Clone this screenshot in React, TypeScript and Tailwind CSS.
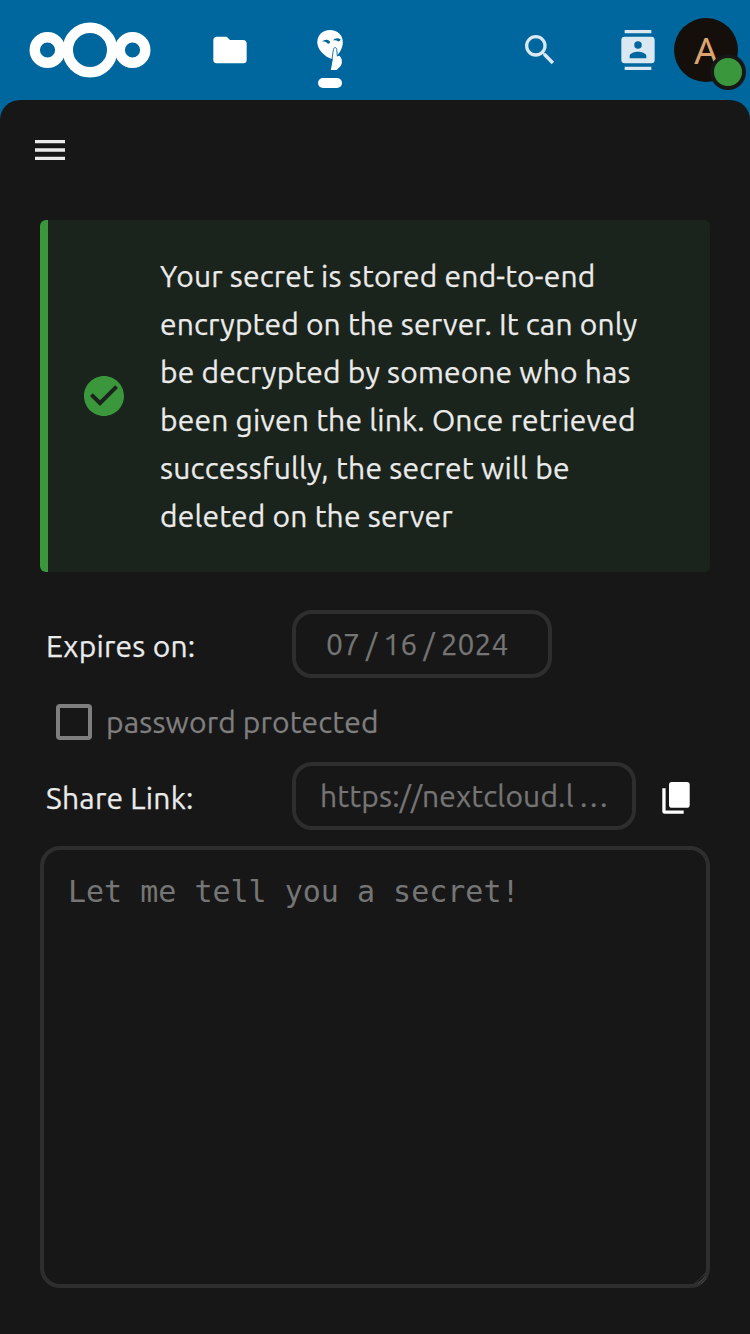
import type { ReactNode } from "react";

function Icon({ d, className }: { d: string; className: string }) {
  return (
    <svg viewBox="0 0 24 24" fill="currentColor" className={className}>
      <path d={d} />
    </svg>
  );
}

const FOLDER =
  "M10,4H4C2.89,4 2,4.89 2,6V18A2,2 0 0,0 4,20H20A2,2 0 0,0 22,18V8C22,6.89 21.1,6 20,6H12L10,4Z";
const MAGNIFY =
  "M9.5,3A6.5,6.5 0 0,1 16,9.5C16,11.11 15.41,12.59 14.44,13.73L14.71,14H15.5L20.5,19L19,20.5L14,15.5V14.71L13.73,14.44C12.59,15.41 11.11,16 9.5,16A6.5,6.5 0 0,1 3,9.5A6.5,6.5 0 0,1 9.5,3M9.5,5C7,5 5,7 5,9.5C5,12 7,14 9.5,14C12,14 14,12 14,9.5C14,7 12,5 9.5,5Z";
const CONTACTS =
  "M20,0H4V2H20V0M4,24H20V22H4V24M20,4H4A2,2 0 0,0 2,6V18A2,2 0 0,0 4,20H20A2,2 0 0,0 22,18V6A2,2 0 0,0 20,4M12,6.75A2.25,2.25 0 0,1 14.25,9A2.25,2.25 0 0,1 12,11.25A2.25,2.25 0 0,1 9.75,9A2.25,2.25 0 0,1 12,6.75M17,17H7V15.5C7,13.83 10.33,13 12,13C13.67,13 17,13.83 17,15.5V17Z";
const MENU = "M3,6H21V8H3V6M3,11H21V13H3V11M3,16H21V18H3V16Z";
const CHECK =
  "M12 2C6.5 2 2 6.5 2 12S6.5 22 12 22 22 17.5 22 12 17.5 2 12 2M10 17L5 12L6.41 10.59L10 14.17L17.59 6.58L19 8L10 17Z";

function Logo() {
  return (
    <svg viewBox="0 0 124 56" fill="none" stroke="#fff" className="h-14 w-[124px]">
      <circle cx="19.5" cy="28" r="12.8" strokeWidth="10.4" />
      <circle cx="62" cy="28" r="22.25" strokeWidth="10.5" />
      <circle cx="104.5" cy="28" r="12.8" strokeWidth="10.4" />
    </svg>
  );
}

function SecretsIcon() {
  return (
    <svg viewBox="0 0 40 42" className="h-[42px] w-10">
      <path
        fill="#fff"
        d="M20 1C27.5 1 32.8 6 32.8 13.2C32.8 19 29.5 24.5 25 28.5L21.5 30C14 27 7.3 20.5 7.3 13.2C7.3 6 12.5 1 20 1Z"
      />
      <path fill="#00679e" d="M12 12.8C14 10 18.5 10 19.9 12.6C20.2 14.8 18.4 15.6 17 14.1C15.5 12.6 13.6 12.4 12 12.8Z" />
      <path fill="#00679e" d="M23.2 11.6C24.5 8.8 28 8.6 30.6 10.3C30.2 12.4 28.4 13.2 27.2 11.8C26.2 10.9 24.7 11.1 23.2 11.6Z" />
      <path
        fill="#fff"
        d="M22.6 30L23.7 20.5C23.9 18.4 26.2 18.4 26.5 20.5L26.9 27.4L29.4 26.8C31.5 28.5 32 31 31.9 33.5C31.7 36 30 38 28 39.6L26.6 41H20.8L22 35Z"
      />
      <path
        fill="none"
        stroke="#00679e"
        strokeWidth="0.9"
        d="M21.6 33L23.4 20.5C23.7 18 26.4 18 26.8 20.5L27.2 26.5"
      />
    </svg>
  );
}

function CopyIcon() {
  return (
    <svg viewBox="0 0 28 32" fill="#fff" className="h-8 w-7">
      <rect x="7" y="0" width="20.7" height="25.7" rx="2.8" />
      <path d="M0.3 6.3H3.6V28.4H21.7V31.7H2.8Q0.3 31.7 0.3 29.2Z" />
    </svg>
  );
}

function Line({ className, children }: { className: string; children: ReactNode }) {
  return (
    <span className={"block whitespace-nowrap [-webkit-text-stroke:0.25px_currentColor] " + className}>
      {children}
    </span>
  );
}

export default function App() {
  return (
    <div className="flex h-[1334px] w-[750px] flex-col overflow-hidden bg-[#00679e] font-['Ubuntu','Noto_Sans',sans-serif] text-[30px] text-[#ebebeb]">
      <header className="flex h-[100px] shrink-0 items-center pl-7">
        <Logo />
        <div className="ml-[58px] text-white">
          <Icon d={FOLDER} className="size-10" />
        </div>
        <div className="ml-[60px] flex h-full w-10 flex-col items-center pt-[29px]">
          <SecretsIcon />
          <div className="mt-[7px] h-2.5 w-6 rounded-full bg-white" />
        </div>
        <div className="ml-[170px] text-[#d9e8f1]">
          <Icon d={MAGNIFY} className="size-10" />
        </div>
        <div className="ml-[58px] text-[#d9e8f1]">
          <Icon d={CONTACTS} className="size-10" />
        </div>
        <div className="relative ml-4 flex size-16 items-center justify-center rounded-full bg-[#140f0a] font-['Noto_Sans',sans-serif] text-[37px] text-[#dca470]">
          <span>A</span>
          <div className="absolute -right-2 -bottom-2 size-9 rounded-full border-4 border-[#171717] bg-[#3b973b]" />
        </div>
      </header>

      <main className="flex flex-1 flex-col rounded-t-[20px] bg-[#171717] px-10">
        <button className="mt-[30px] -ml-2.5 size-10 text-[#ebebeb]">
          <Icon d={MENU} className="size-10" />
        </button>

        <section className="mt-[50px] flex h-[352px] items-center rounded-md border-l-8 border-[#3b973b] bg-[#1b241c] pl-8">
          <Icon d={CHECK} className="size-12 text-[#3b973b]" />
          <p className="ml-8 leading-[48px]">
            <Line className="tracking-[0.17px]">Your secret is stored end-to-end</Line>
            <Line className="tracking-[0.15px]">encrypted on the server. It can only</Line>
            <Line className="tracking-[0.15px]">be decrypted by someone who has</Line>
            <Line className="tracking-[0.17px]">been given the link. Once retrieved</Line>
            <Line className="tracking-[0.22px]">successfully, the secret will be</Line>
            <Line className="tracking-[0.17px]">deleted on the server</Line>
          </p>
        </section>

        <div className="mt-[38px] flex h-[68px] items-center">
          <Line className="w-[252px] pt-1 pl-1.5 tracking-[0.22px]">Expires on:</Line>
          <div className="flex h-[68px] w-[260px] items-center rounded-[20px] border-4 border-[#2e2e2e] pl-[30px] text-[#757575]">
            <Line className="[word-spacing:-0.65px]">07 / 16 / 2024</Line>
          </div>
        </div>

        <div className="mt-[26px] ml-4 flex h-9 items-center text-[#7f7f7f]">
          <div className="size-9 rounded border-4 border-[#7f7f7f]" />
          <Line className="ml-3.5 tracking-[0.14px]">password protected</Line>
        </div>

        <div className="mt-[22px] flex h-[68px] items-center">
          <Line className="w-[252px] pt-1 pl-1.5 tracking-[0.22px]">Share Link:</Line>
          <div className="flex h-[68px] w-[344px] items-center rounded-[20px] border-4 border-[#2e2e2e] pl-6 text-[#757575]">
            <Line className="tracking-[0.17px]">
              https://nextcloud.l<span className="ml-[5px]">…</span>
            </Line>
          </div>
          <button className="ml-[26px] pt-1">
            <CopyIcon />
          </button>
        </div>

        <div className="relative mt-4 h-[442px] rounded-[20px] border-4 border-[#2e2e2e] px-6 pt-6 font-['DejaVu_Sans_Mono',monospace] text-[30px] leading-[36px] text-[#757575]">
          Let me tell you a secret!
          <svg viewBox="0 0 12 12" stroke="#4a4a4a" strokeWidth="1" className="absolute right-0 bottom-0 size-3">
            <path d="M1 11.5L11.5 1M4 12L12 4M7 12L12 7" strokeDasharray="1 0.5" />
          </svg>
        </div>
      </main>
    </div>
  );
}
